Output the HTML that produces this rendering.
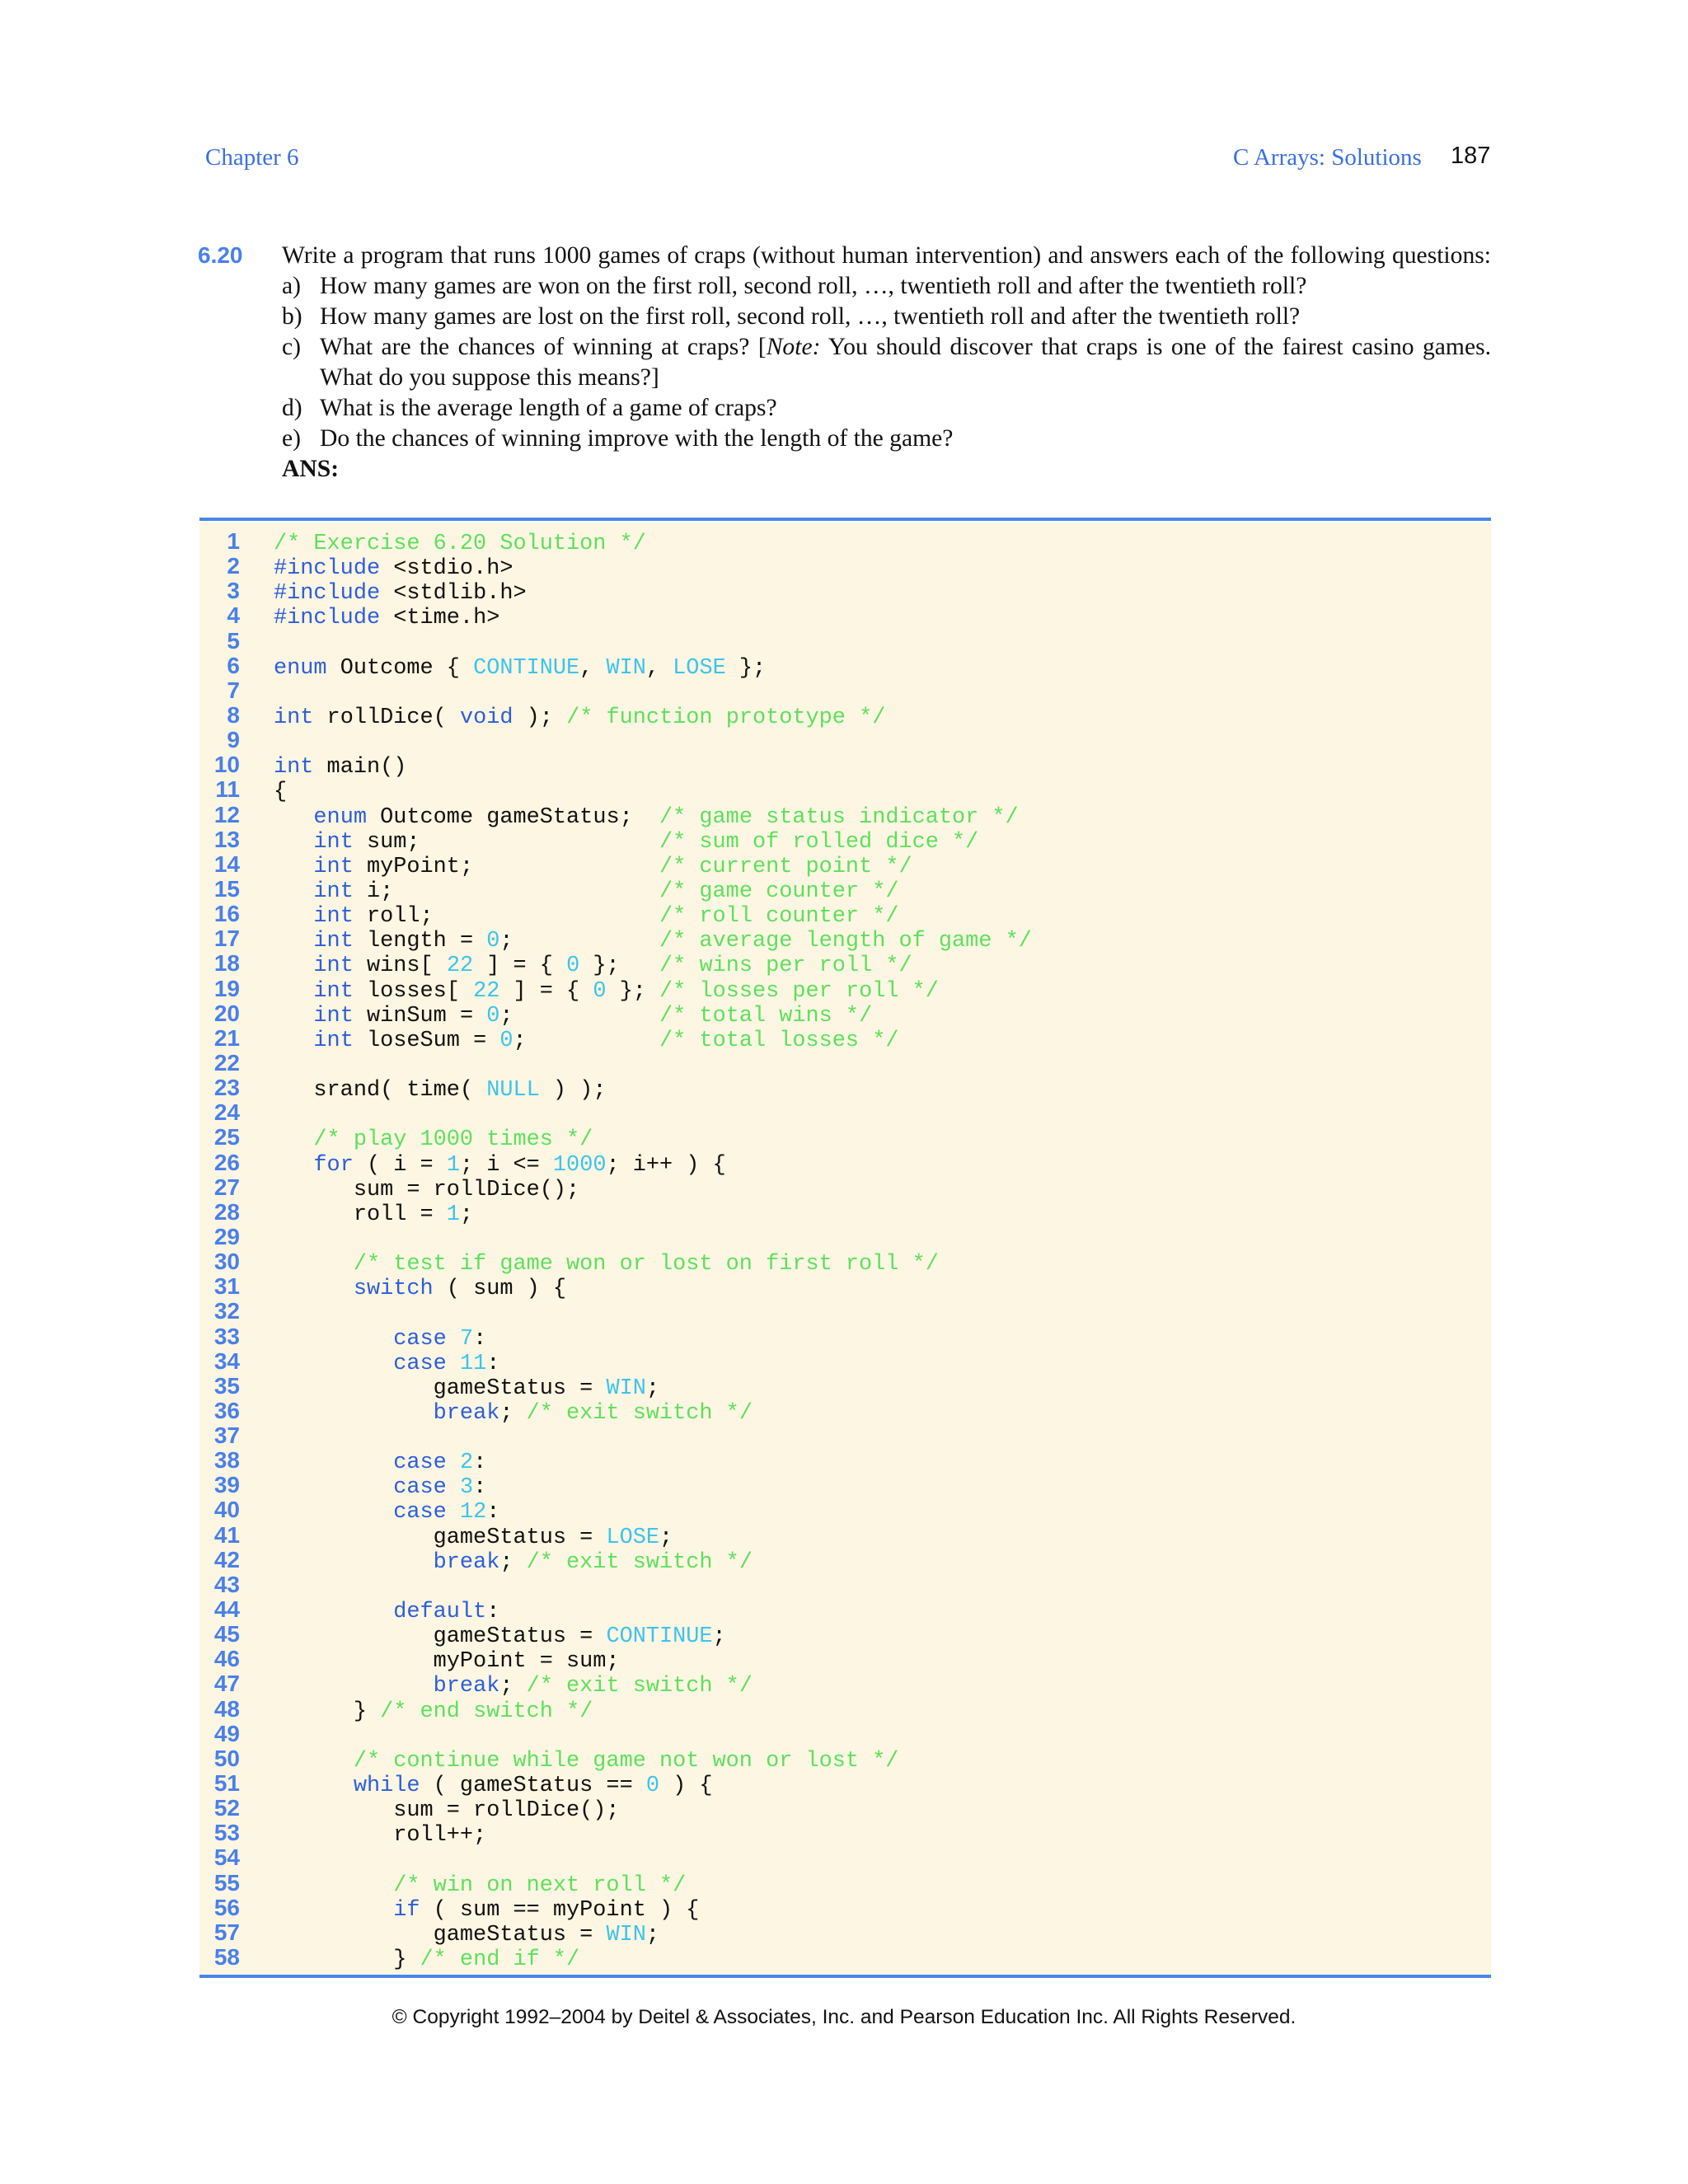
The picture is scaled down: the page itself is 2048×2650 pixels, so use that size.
<!DOCTYPE html>
<html><head><meta charset="utf-8">
<style>
html,body{margin:0;padding:0;background:#fff;}
body{width:2048px;height:2650px;position:relative;overflow:hidden;font-family:"Liberation Serif",serif;}
.hdr{position:absolute;top:175px;font-size:29px;color:#3a6fe0;}
.pg{position:absolute;top:173px;left:1760px;font-family:"Liberation Sans",sans-serif;font-size:29px;color:#111;}
.num{position:absolute;left:240px;top:294px;font-family:"Liberation Sans",sans-serif;font-weight:bold;font-size:28px;color:#4a80e8;}
.txt{position:absolute;left:342px;width:1467px;font-size:29.6px;color:#111;line-height:37px;}
.txt div{text-align:justify;text-align-last:justify;white-space:nowrap;}
.txt .li{position:relative;padding-left:46px;}
.txt .li span.l{position:absolute;left:0;}
.txt .nj{text-align-last:left;}
.rule{position:absolute;left:242px;width:1567px;height:4px;background:#4a86e8;}
.code{position:absolute;left:242px;top:634px;width:1567px;height:1764px;background:#fdf6e2;}
pre{margin:0;position:absolute;top:645px;font-family:"Liberation Mono",monospace;font-size:26.9px;line-height:30.14px;color:#111;}
.ln{left:200px;top:642px;width:91px;text-align:right;font-family:"Liberation Sans",sans-serif;font-weight:bold;color:#4a80e8;font-size:28px;}
.src{left:332px;}
.k{color:#2d5fd8}.c{color:#5ee05e}.n{color:#3cc4ec}
.foot{position:absolute;top:2434px;left:0;width:2048px;text-align:center;font-family:"Liberation Sans",sans-serif;font-size:24.5px;color:#111;}
</style></head><body>
<div class="hdr" style="left:249px">Chapter 6</div>
<div class="hdr" style="left:1496px">C Arrays: Solutions</div>
<div class="pg">187</div>
<div class="num">6.20</div>
<div class="txt" style="top:292px">
<div style="white-space:normal">Write a program that runs 1000 games of craps (without human intervention) and answers each of the following questions:</div>
<div class="li nj"><span class="l">a)</span>How many games are won on the first roll, second roll, …, twentieth roll and after the twentieth roll?</div>
<div class="li nj"><span class="l">b)</span>How many games are lost on the first roll, second roll, …, twentieth roll and after the twentieth roll?</div>
<div class="li" style="white-space:normal"><span class="l">c)</span>What are the chances of winning at craps? [<i>Note:</i> You should discover that craps is one of the fairest casino games.</div>
<div class="li nj">What do you suppose this means?]</div>
<div class="li nj"><span class="l">d)</span>What is the average length of a game of craps?</div>
<div class="li nj"><span class="l">e)</span>Do the chances of winning improve with the length of the game?</div>
<div class="nj"><b>ANS:</b></div>
</div>
<div class="code"></div>
<div class="rule" style="top:628px"></div>
<div class="rule" style="top:2396px"></div>
<pre class="ln">1
2
3
4
5
6
7
8
9
10
11
12
13
14
15
16
17
18
19
20
21
22
23
24
25
26
27
28
29
30
31
32
33
34
35
36
37
38
39
40
41
42
43
44
45
46
47
48
49
50
51
52
53
54
55
56
57
58</pre>
<pre class="src"><span class="c">/* Exercise 6.20 Solution */</span>
<span class="k">#include</span> &lt;stdio.h&gt;
<span class="k">#include</span> &lt;stdlib.h&gt;
<span class="k">#include</span> &lt;time.h&gt;

<span class="k">enum</span> Outcome { <span class="n">CONTINUE</span>, <span class="n">WIN</span>, <span class="n">LOSE</span> };

<span class="k">int</span> rollDice( <span class="k">void</span> ); <span class="c">/* function prototype */</span>

<span class="k">int</span> main()
{
   <span class="k">enum</span> Outcome gameStatus;  <span class="c">/* game status indicator */</span>
   <span class="k">int</span> sum;                  <span class="c">/* sum of rolled dice */</span>
   <span class="k">int</span> myPoint;              <span class="c">/* current point */</span>
   <span class="k">int</span> i;                    <span class="c">/* game counter */</span>
   <span class="k">int</span> roll;                 <span class="c">/* roll counter */</span>
   <span class="k">int</span> length = <span class="n">0</span>;           <span class="c">/* average length of game */</span>
   <span class="k">int</span> wins[ <span class="n">22</span> ] = { <span class="n">0</span> };   <span class="c">/* wins per roll */</span>
   <span class="k">int</span> losses[ <span class="n">22</span> ] = { <span class="n">0</span> }; <span class="c">/* losses per roll */</span>
   <span class="k">int</span> winSum = <span class="n">0</span>;           <span class="c">/* total wins */</span>
   <span class="k">int</span> loseSum = <span class="n">0</span>;          <span class="c">/* total losses */</span>

   srand( time( <span class="n">NULL</span> ) );

   <span class="c">/* play 1000 times */</span>
   <span class="k">for</span> ( i = <span class="n">1</span>; i &lt;= <span class="n">1000</span>; i++ ) {
      sum = rollDice();
      roll = <span class="n">1</span>;

      <span class="c">/* test if game won or lost on first roll */</span>
      <span class="k">switch</span> ( sum ) {

         <span class="k">case</span> <span class="n">7</span>:
         <span class="k">case</span> <span class="n">11</span>:
            gameStatus = <span class="n">WIN</span>;
            <span class="k">break</span>; <span class="c">/* exit switch */</span>

         <span class="k">case</span> <span class="n">2</span>:
         <span class="k">case</span> <span class="n">3</span>:
         <span class="k">case</span> <span class="n">12</span>:
            gameStatus = <span class="n">LOSE</span>;
            <span class="k">break</span>; <span class="c">/* exit switch */</span>

         <span class="k">default</span>:
            gameStatus = <span class="n">CONTINUE</span>;
            myPoint = sum;
            <span class="k">break</span>; <span class="c">/* exit switch */</span>
      } <span class="c">/* end switch */</span>

      <span class="c">/* continue while game not won or lost */</span>
      <span class="k">while</span> ( gameStatus == <span class="n">0</span> ) {
         sum = rollDice();
         roll++;

         <span class="c">/* win on next roll */</span>
         <span class="k">if</span> ( sum == myPoint ) {
            gameStatus = <span class="n">WIN</span>;
         } <span class="c">/* end if */</span></pre>
<div class="foot">© Copyright 1992–2004 by Deitel &amp; Associates, Inc. and Pearson Education Inc. All Rights Reserved.</div>
</body></html>
